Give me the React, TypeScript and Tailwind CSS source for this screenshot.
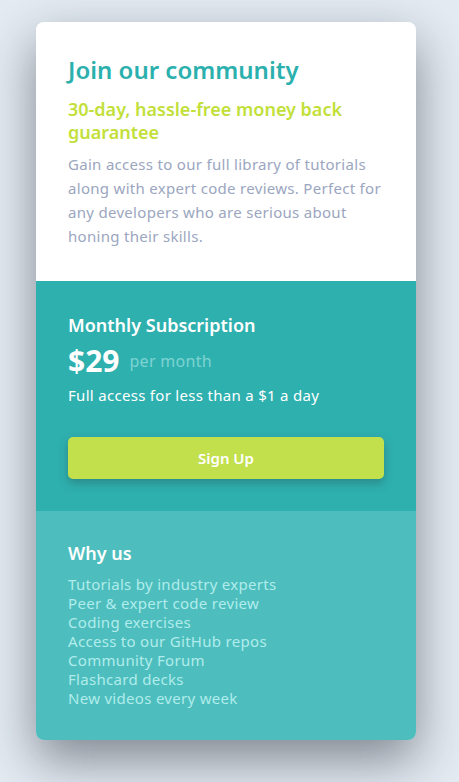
const features = [
  'Tutorials by industry experts',
  'Peer & expert code review',
  'Coding exercises',
  'Access to our GitHub repos',
  'Community Forum',
  'Flashcard decks',
  'New videos every week',
];

export default function App() {
  return (
    <div
      className="min-h-screen bg-[#e4ebf3] pl-[36px] pt-[22px] pb-10"
      style={{ fontFamily: '"Noto Sans", "Open Sans", sans-serif' }}
    >
      <div className="w-[380px] rounded-lg overflow-hidden shadow-[0_20px_50px_rgba(30,36,46,0.5)]">
        <div className="bg-white px-8 pt-8 pb-[33px]">
          <h1 className="text-2xl leading-8 font-semibold text-[#2bb0ae]">Join our community</h1>
          <h2 className="mt-3 text-lg leading-[23px] font-semibold text-[#c2df3a]">
            30-day, hassle-free money back guarantee
          </h2>
          <p className="mt-2 text-[15px] leading-6 tracking-[0.3px] text-[#9ba6c0]">
            Gain access to our full library of tutorials along with expert code reviews. Perfect for any
            developers who are serious about honing their skills.
          </p>
        </div>

        <div className="bg-[#2eb0af] px-8 pt-8 pb-8 text-white">
          <h3 className="text-lg leading-6 font-semibold">Monthly Subscription</h3>
          <div className="mt-1.5 flex items-center gap-2.5">
            <span className="text-[30px] leading-9 font-bold">$29</span>
            <span className="text-base tracking-[0.3px] text-[#7ed3d2]">per month</span>
          </div>
          <p className="mt-1 text-[15px] leading-6 tracking-[0.3px]">Full access for less than a $1 a day</p>
          <button className="mt-[30px] w-full h-[42px] rounded-[5px] bg-[#c2df4c] text-[15px] font-semibold text-white shadow-[0_4px_10px_rgba(40,60,60,0.35)]">
            Sign Up
          </button>
        </div>

        <div className="bg-[#4dbebd] px-8 pt-[30px] pb-8">
          <h3 className="text-lg leading-6 font-semibold text-white">Why us</h3>
          <ul className="mt-2.5 text-[15px] leading-[19px] tracking-[0.3px] text-[#b1ecec]">
            {features.map(f => (
              <li key={f}>{f}</li>
            ))}
          </ul>
        </div>
      </div>
    </div>
  );
}
